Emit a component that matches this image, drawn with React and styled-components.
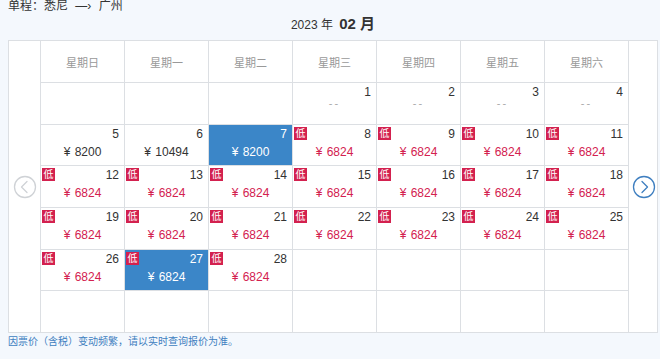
import React from 'react';
import styled, { createGlobalStyle } from 'styled-components';

const GlobalStyle = createGlobalStyle`
  html, body {
    margin: 0;
    padding: 0;
    background: #f4f8fd;
    font-family: "Liberation Sans", "Noto Sans CJK SC", sans-serif;
  }
  *, *::before, *::after {
    box-sizing: border-box;
  }
`;

const Page = styled.div`
  width: 660px;
  height: 359px;
  overflow: hidden;
  padding: 0 2px 0 8px;
  background: #f4f8fd;
`;

const Route = styled.div`
  height: 12px;
  line-height: 12px;
  font-size: 12px;
  color: #333;
  word-spacing: 4px;
`;

const Title = styled.div`
  height: 28px;
  padding-top: 2px;
  line-height: 20px;
  text-align: center;
  color: #333;
  font-size: 12px;
  b {
    font-size: 15px;
    margin-left: 3px;
  }
`;

const Panel = styled.div`
  display: flex;
  height: 293px;
  background: #fff;
  border: 1px solid #dcdfe3;
`;

const Side = styled.div`
  width: ${(p) => p.$w}px;
  flex: none;
  display: flex;
  align-items: center;
  justify-content: center;
  cursor: pointer;
`;

const Grid = styled.div`
  display: grid;
  grid-template-columns: repeat(7, 83px);
  grid-template-rows: 41px repeat(6, 1fr);
  gap: 1px;
  background: #dcdfe3;
  border-left: 1px solid #dcdfe3;
  border-right: 1px solid #dcdfe3;
`;

const Head = styled.div`
  background: #fff;
  display: flex;
  align-items: center;
  justify-content: center;
  font-size: 11px;
  color: #999;
`;

const Cell = styled.div`
  position: relative;
  background: ${(p) => (p.$active ? '#3b86c8' : '#fff')};
  color: ${(p) => (p.$active ? '#fff' : '#333')};
`;

const DateNum = styled.div`
  padding: 2px 5px 0 0;
  line-height: 14px;
  font-size: 12px;
  text-align: right;
`;

const Price = styled.div`
  margin-top: 4px;
  line-height: 14px;
  font-size: 12px;
  text-align: center;
  word-spacing: 1px;
  color: ${(p) => (p.$active ? '#fff' : p.$low ? '#d3214f' : '#333')};
`;

const Empty = styled.div`
  margin-top: -3px;
  line-height: 14px;
  font-size: 11px;
  text-align: center;
  color: #aaa;
  letter-spacing: 2px;
`;

const Badge = styled.span`
  position: absolute;
  left: 1px;
  top: 2px;
  width: 13px;
  height: 13px;
  background: #d3214f;
  color: #fff;
  font-size: 10px;
  line-height: 13px;
  text-align: center;
`;

const Note = styled.div`
  margin-top: 2px;
  line-height: 14px;
  font-size: 10px;
  color: #3f7fc0;
`;

const Arrow = ({ dir, color }) => (
  <svg width="24" height="24" viewBox="0 0 24 24">
    <circle cx="12" cy="12" r="10.5" fill="none" stroke={color} strokeWidth="1.3" />
    <path
      d={dir === 'left' ? 'M14 6.5 L8.5 12 L14 17.5' : 'M10 6.5 L15.5 12 L10 17.5'}
      fill="none"
      stroke={color}
      strokeWidth="1.3"
      strokeLinecap="round"
      strokeLinejoin="round"
    />
  </svg>
);

const weekdays = ['星期日', '星期一', '星期二', '星期三', '星期四', '星期五', '星期六'];

function buildDays() {
  const cells = [];
  for (let i = 0; i < 3; i++) cells.push(null);
  for (let d = 1; d <= 28; d++) {
    let price = null;
    let low = false;
    if (d === 5 || d === 7) price = 8200;
    else if (d === 6) price = 10494;
    else if (d >= 8) {
      price = 6824;
      low = true;
    }
    cells.push({ d, price, low, active: d === 7 || d === 27 });
  }
  while (cells.length < 42) cells.push(null);
  return cells;
}

export default function App() {
  const days = buildDays();
  return (
    <Page>
      <GlobalStyle />
      <Route>单程：悉尼 —› 广州</Route>
      <Title>
        2023 年 <b>02 月</b>
      </Title>
      <Panel>
        <Side $w={31}>
          <Arrow dir="left" color="#cfd2d6" />
        </Side>
        <Grid>
          {weekdays.map((w) => (
            <Head key={w}>{w}</Head>
          ))}
          {days.map((c, i) =>
            c ? (
              <Cell key={i} $active={c.active}>
                {c.low && <Badge>低</Badge>}
                <DateNum>{c.d}</DateNum>
                {c.price ? (
                  <Price $low={c.low} $active={c.active}>
                    ¥ {c.price}
                  </Price>
                ) : (
                  <Empty>--</Empty>
                )}
              </Cell>
            ) : (
              <Cell key={i} />
            )
          )}
        </Grid>
        <Side $w={29}>
          <Arrow dir="right" color="#3f7fc0" />
        </Side>
      </Panel>
      <Note>因票价（含税）变动频繁，请以实时查询报价为准。</Note>
    </Page>
  );
}
